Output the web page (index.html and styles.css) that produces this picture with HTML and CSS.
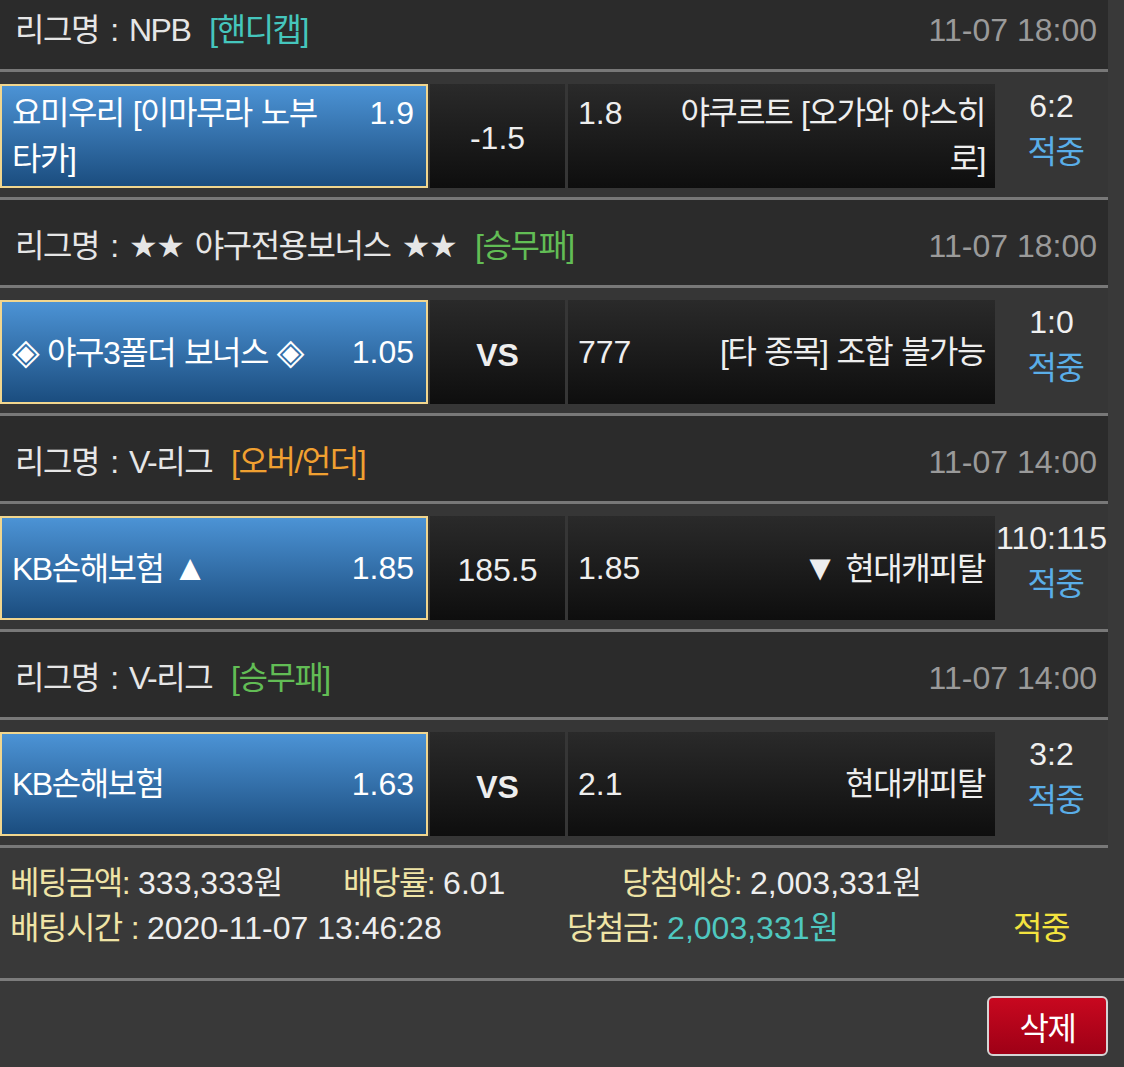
FILE: index.html
```html
<!DOCTYPE html>
<html lang="ko">
  <head>
    <meta charset="UTF-8" />
    <meta name="viewport" content="width=device-width, initial-scale=1.0" />
    <title>베팅내역</title>
    <link rel="stylesheet" href="styles.css">
  </head>
  <body>
    <div class="bet-slip">
      <!-- 1. NPB 핸디캡 -->
      <div class="league">
        <div class="league-title">리그명 : NPB<span class="tag tag-handi">[핸디캡]</span></div>
        <div class="league-time num">11-07 18:00</div>
      </div>
      <div class="match">
        <div class="pick home selected">
          <div class="pick-inner"><span class="odds num">1.9</span>요미우리 [이마무라 노부 타카]</div>
        </div>
        <div class="line num">-1.5</div>
        <div class="pick away">
          <div class="pick-inner"><span class="odds num">1.8</span>야쿠르트 [오가와 야스히 로]</div>
        </div>
        <div class="result">
          <div class="score num">6:2</div>
          <div class="status">적중</div>
        </div>
      </div>

      <!-- 2. 야구전용보너스 -->
      <div class="league">
        <div class="league-title">리그명 : ★★ 야구전용보너스 ★★<span class="tag tag-win">[승무패]</span></div>
        <div class="league-time num">11-07 18:00</div>
      </div>
      <div class="match">
        <div class="pick home selected">
          <div class="pick-inner"><span class="odds num">1.05</span><span class="mark">◈</span> 야구3폴더 보너스 <span class="mark">◈</span></div>
        </div>
        <div class="line vs">VS</div>
        <div class="pick away">
          <div class="pick-inner"><span class="odds num">777</span>[타 종목] 조합 불가능</div>
        </div>
        <div class="result">
          <div class="score num">1:0</div>
          <div class="status">적중</div>
        </div>
      </div>

      <!-- 3. V-리그 오버/언더 -->
      <div class="league">
        <div class="league-title">리그명 : V-리그<span class="tag tag-ou">[오버/언더]</span></div>
        <div class="league-time num">11-07 14:00</div>
      </div>
      <div class="match">
        <div class="pick home selected">
          <div class="pick-inner"><span class="odds num">1.85</span>KB손해보험 <span class="mark">▲</span></div>
        </div>
        <div class="line num">185.5</div>
        <div class="pick away">
          <div class="pick-inner"><span class="odds num">1.85</span><span class="mark">▼</span> 현대캐피탈</div>
        </div>
        <div class="result">
          <div class="score num">110:115</div>
          <div class="status">적중</div>
        </div>
      </div>

      <!-- 4. V-리그 승무패 -->
      <div class="league">
        <div class="league-title">리그명 : V-리그<span class="tag tag-win">[승무패]</span></div>
        <div class="league-time num">11-07 14:00</div>
      </div>
      <div class="match">
        <div class="pick home selected">
          <div class="pick-inner"><span class="odds num">1.63</span>KB손해보험</div>
        </div>
        <div class="line vs">VS</div>
        <div class="pick away">
          <div class="pick-inner"><span class="odds num">2.1</span>현대캐피탈</div>
        </div>
        <div class="result">
          <div class="score num">3:2</div>
          <div class="status">적중</div>
        </div>
      </div>
    </div>

    <div class="summary">
      <div class="summary-row">
        <span class="field field-amount"><span class="label">베팅금액:</span>&nbsp;<span class="num">333,333</span>원</span>
        <span class="field field-rate"><span class="label">배당률:</span>&nbsp;<span class="num">6.01</span></span>
        <span class="field"><span class="label">당첨예상:</span>&nbsp;<span class="num">2,003,331</span>원</span>
      </div>
      <div class="summary-row">
        <span class="field field-time"><span class="label">배팅시간 :</span>&nbsp;<span class="num">2020-11-07 13:46:28</span></span>
        <span class="field field-win"><span class="label">당첨금:</span>&nbsp;<span class="win-amount"><span class="num">2,003,331</span>원</span></span>
        <span class="field final-status">적중</span>
      </div>
    </div>

    <div class="actions">
      <button class="delete-button">삭제</button>
    </div>
  </body>
</html>
```

FILE: styles.css
```css
* {
  margin: 0;
  padding: 0;
  box-sizing: border-box;
}

body {
  background-color: #393939;
  color: #eeeeee;
  font-family: "Liberation Sans", "DejaVu Sans", "Noto Sans CJK KR", sans-serif;
  font-size: 32px;
  letter-spacing: -1.5px;
  word-spacing: 1.5px;
  overflow: hidden;
}

.num {
  letter-spacing: 0;
  word-spacing: 0;
}

/* list is scrolled a little, first header is cut */
.bet-slip {
  width: 1108px;
  margin-top: -16px;
}

.league {
  height: 88px;
  padding: 8px 11px 0 15px;
  display: flex;
  align-items: center;
  justify-content: space-between;
  background-color: #2b2b2b;
  border-bottom: 3px solid #787878;
  line-height: 1.2;
}

.league-title {
  color: #e6e6e6;
  word-spacing: 4px;
}

.league-time {
  color: #9a9a9a;
}

.tag {
  margin-left: 19px;
  word-spacing: 0;
}

.tag-handi {
  color: #45c6bd;
}

.tag-win {
  color: #62bd55;
}

.tag-ou {
  color: #f0a031;
}

.match {
  display: flex;
  padding: 12px 0 9px;
  background-color: #363636;
  border-bottom: 3px solid #787878;
  line-height: 46px;
}

.pick {
  height: 104px;
  display: flex;
  align-items: center;
  background: linear-gradient(to bottom, #2a2a2a, #0e0e0e);
}

.pick-inner {
  width: 100%;
}

.mark {
  font-size: 36px;
}

.home {
  width: 428px;
  padding: 0 12px 0 10px;
}

.home .odds {
  float: right;
  min-width: 80px;
  text-align: right;
}

.selected {
  border: 2px solid #f1d68e;
  background: linear-gradient(to bottom, #4c93d5, #1b4d7f);
  color: #ffffff;
}

.away {
  width: 427px;
  margin-left: 3px;
  padding: 0 10px;
  text-align: right;
}

.away .odds {
  float: left;
  min-width: 80px;
  text-align: left;
}

.line {
  width: 135px;
  height: 104px;
  margin-left: 2px;
  display: flex;
  align-items: center;
  justify-content: center;
  background: linear-gradient(to bottom, #2a2a2a, #0e0e0e);
  padding-top: 3px;
}

.vs {
  font-weight: bold;
  letter-spacing: 0;
  padding-top: 6px;
}

.result {
  flex: 1;
  height: 104px;
  padding-bottom: 14px;
  display: flex;
  flex-direction: column;
  justify-content: center;
  align-items: center;
  white-space: nowrap;
}

.score {
  color: #f0f0f0;
}

.status {
  color: #5aaee8;
  padding-left: 8px;
}

.summary {
  padding: 13px 0 27px 10px;
  border-bottom: 3px solid #7c7c7c;
  line-height: 45px;
  white-space: nowrap;
}

.summary-row {
  display: flex;
}

.field-amount {
  width: 333px;
}

.field-rate {
  width: 279px;
}

.field-time {
  width: 557px;
}

.field-win {
  width: 446px;
}

.label {
  color: #efe4a6;
}

.win-amount {
  color: #4fc8c0;
}

.final-status {
  color: #f3e33f;
}

.actions {
  display: flex;
  justify-content: flex-end;
  padding: 15px 16px 0 0;
}

.delete-button {
  width: 121px;
  height: 60px;
  border: 2px solid #d4d4d4;
  border-radius: 6px;
  background: linear-gradient(to bottom, #c8081f, #9e0016);
  color: #ffffff;
  font-family: inherit;
  font-size: 32px;
  letter-spacing: -1.5px;
  cursor: pointer;
}
```
